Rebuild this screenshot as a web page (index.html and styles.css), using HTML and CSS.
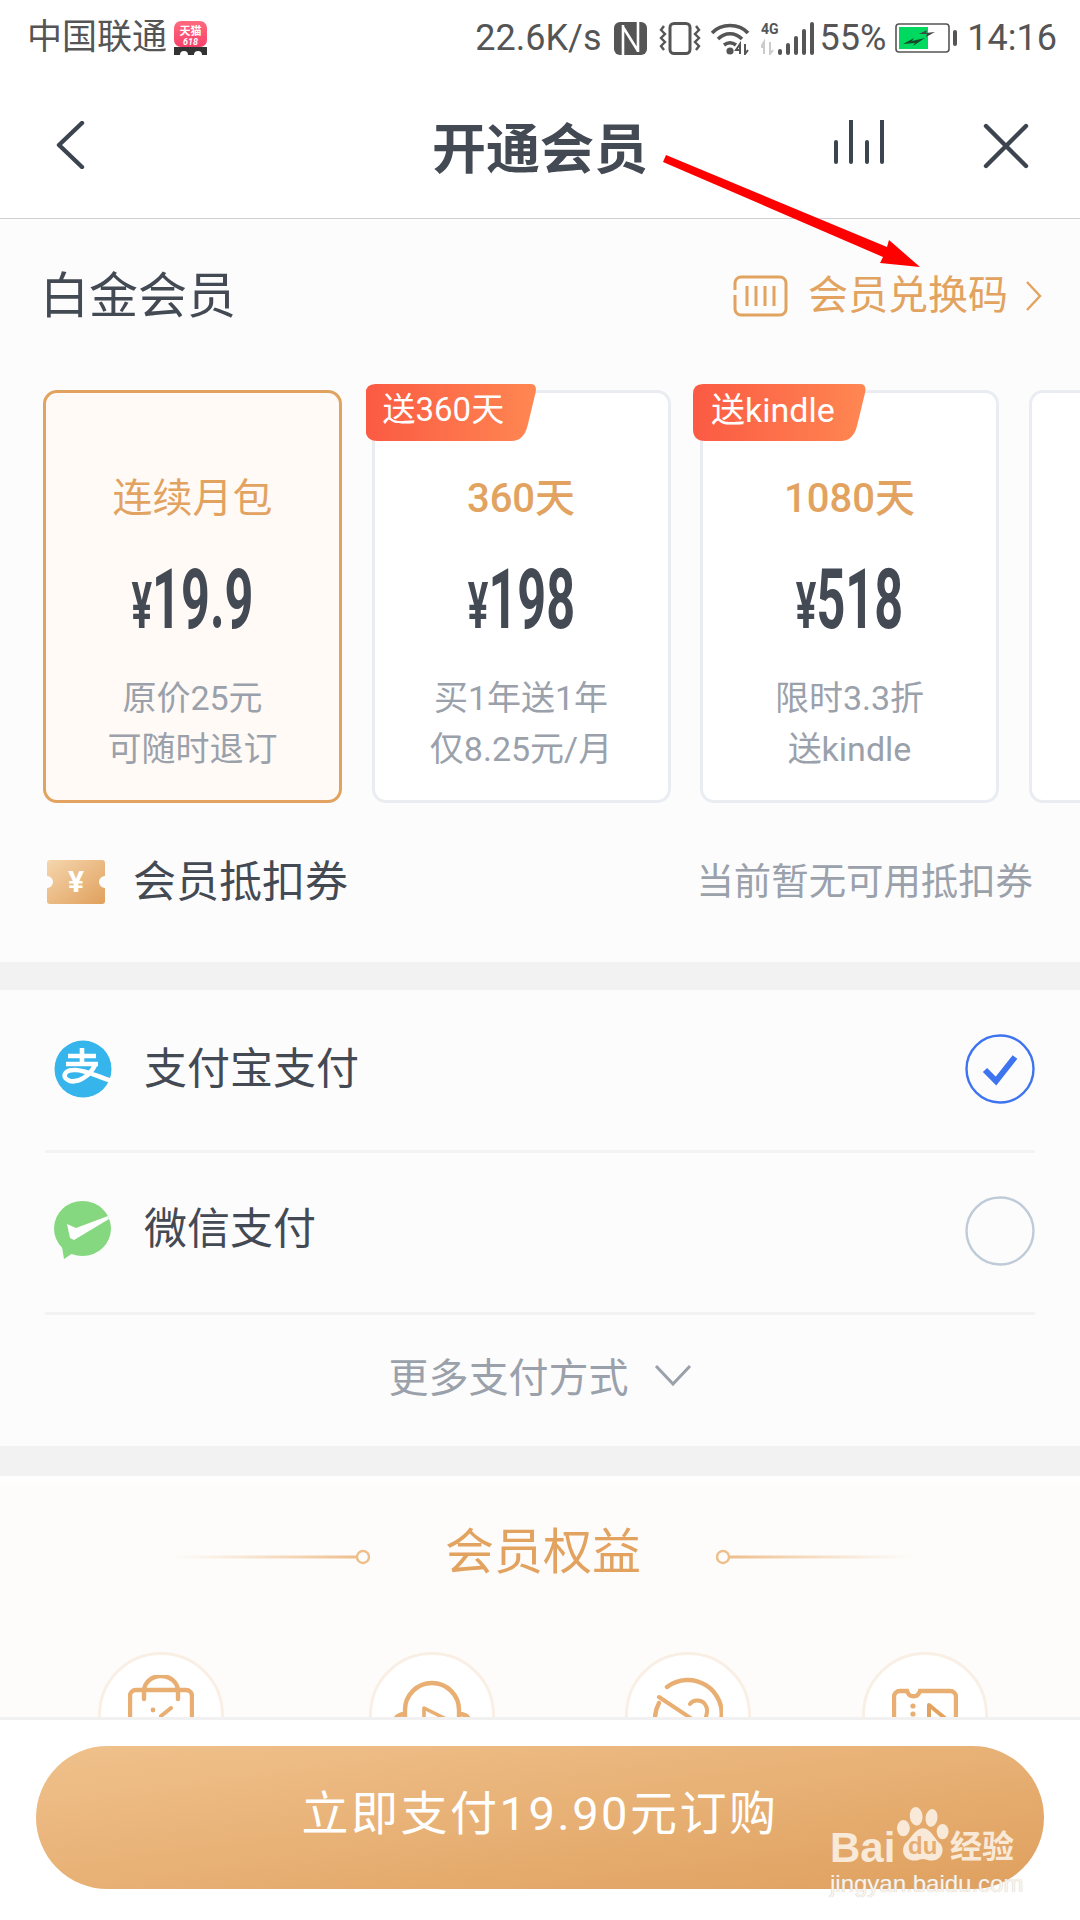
FILE: index.html
```html
<!DOCTYPE html>
<html lang="zh-CN">
<head>
<meta charset="utf-8">
<title>开通会员</title>
<link rel="stylesheet" href="styles.css">
</head>
<body>
<div class="page">
  <div class="statusbar">
    <div class="sb-left">
      <span class="carrier">中国联通</span>
      <svg class="tmall" width="34" height="34" viewBox="0 0 34 34">
        <defs><linearGradient id="tm" x1="0" y1="0" x2="0" y2="1"><stop offset="0" stop-color="#ff6b7d"/><stop offset="1" stop-color="#f9406c"/></linearGradient></defs>
        <rect x="0" y="0" width="33" height="26" rx="7" fill="url(#tm)"/>
        <text x="16.5" y="14" class="tm-a" text-anchor="middle">天猫</text>
        <text x="16.5" y="24" class="tm-b" text-anchor="middle">618</text>
        <path d="M0 26h33v8H28a4 4 0 0 0-8 0h-6a4 4 0 0 0-8 0H0z" fill="#333"/>
      </svg>
    </div>
    <div class="sb-right">
      <span class="speed">22.6K/s</span>
      <svg class="s-nfc" width="33" height="33" viewBox="0 0 33 33"><rect width="33" height="33" rx="6" fill="#555"/><path d="M9 33V3M24 0v30M9 5l15 24" fill="none" stroke="#fff" stroke-width="2.6"/></svg>
      <svg class="s-vib" width="42" height="33" viewBox="0 0 42 33"><rect x="11" y="1.5" width="20" height="30" rx="4" fill="none" stroke="#555" stroke-width="3"/><path d="M5 4 2 8l4 4-4 4 4 4-4 4 3 4M37 4l3 4-4 4 4 4-4 4 4 4-3 4" fill="none" stroke="#555" stroke-width="2.4"/></svg>
      <svg class="s-wifi" width="40" height="33" viewBox="0 0 40 33"><path d="M1 11C10 1 28 1 37 11M7 17c7-7 17-7 24 0M13 23c4-3 8-3 12 0" fill="none" stroke="#555" stroke-width="3.6"/><circle cx="19" cy="29" r="3.6" fill="#555"/><path d="M29 32V22l-4 6h4M34 22v10l3-4" fill="none" stroke="#555" stroke-width="2"/></svg>
      <svg class="s-sig" width="53" height="33" viewBox="0 0 53 33"><text x="0" y="12" class="s-4g">4G</text><path d="M3 32V20l-3 5h3M9 20v12l3-4" fill="none" stroke="#ccc" stroke-width="2"/><rect x="17" y="27" width="4" height="6" rx="2" fill="#555"/><rect x="25" y="21" width="4" height="12" rx="2" fill="#555"/><rect x="33" y="14" width="4" height="19" rx="2" fill="#555"/><rect x="41" y="7" width="4" height="26" rx="2" fill="#555"/><rect x="49" y="0" width="4" height="33" rx="2" fill="#555"/></svg>
      <span class="pct">55%</span>
      <svg class="s-bat" width="62" height="30" viewBox="0 0 62 30"><rect x="1" y="1" width="53" height="28" rx="3" fill="#fff" stroke="#555" stroke-width="1.6"/><rect x="4" y="4" width="29" height="22" fill="#00d95f"/><path d="M8 21 19 15 17 18 30 15 18 23 20 20z" fill="#14492b"/><path d="M24 11 32 7 31 10 40 9 31 14 32 11z" fill="#444"/><rect x="58" y="7" width="4" height="16" rx="2" fill="#555"/></svg>
      <span class="clock">14:16</span>
    </div>
  </div>

  <header class="topbar">
    <svg class="ic-back" width="30" height="48" viewBox="0 0 30 48"><path d="M27 2 4 24l23 22" fill="none" stroke="#3c4450" stroke-width="4.4" stroke-linecap="round" stroke-linejoin="round"/></svg>
    <h1 class="title">开通会员</h1>
    <svg class="ic-bars" width="50" height="44" viewBox="0 0 50 44"><path d="M2 22v20M17 0v42M33 22v20M48 0v42" stroke="#3c4450" stroke-width="4" stroke-linecap="round"/></svg>
    <svg class="ic-close" width="46" height="46" viewBox="0 0 46 46"><path d="M3 3l40 40M43 3 3 43" stroke="#3c4450" stroke-width="4.4" stroke-linecap="round"/></svg>
  </header>

  <section class="plans">
    <div class="plans-head">
      <h2 class="plans-title">白金会员</h2>
      <div class="redeem">
        <svg width="55" height="42" viewBox="0 0 55 42"><path d="M2 15V8a6 6 0 0 1 6-6h39a6 6 0 0 1 6 6v26a6 6 0 0 1-6 6H8a6 6 0 0 1-6-6V20" fill="none" stroke="#e2a361" stroke-width="3"/><path d="M14 11v20M23 11v20M32 11v20M41 11v20" stroke="#e2a361" stroke-width="3"/></svg>
        <span class="redeem-text">会员兑换码</span>
        <svg class="redeem-chev" width="17" height="32" viewBox="0 0 17 32"><path d="M2 2l13 14L2 30" fill="none" stroke="#e2a361" stroke-width="2.4"/></svg>
      </div>
    </div>

    <div class="cards">
      <div class="card card-on">
        <div class="card-name">连续月包</div>
        <div class="price"><span class="yen">¥</span>19.9</div>
        <div class="card-note">原价25元<br>可随时退订</div>
      </div>
      <div class="card">
        <div class="tag tag-a">送360天</div>
        <div class="card-name">360天</div>
        <div class="price"><span class="yen">¥</span>198</div>
        <div class="card-note">买1年送1年<br>仅8.25元/月</div>
      </div>
      <div class="card">
        <div class="tag tag-b">送kindle</div>
        <div class="card-name">1080天</div>
        <div class="price"><span class="yen">¥</span>518</div>
        <div class="card-note">限时3.3折<br>送kindle</div>
      </div>
      <div class="card"></div>
    </div>

    <div class="voucher">
      <svg width="58" height="44" viewBox="0 0 58 44">
        <defs><linearGradient id="vc" x1="0" y1="0" x2="1" y2="1"><stop offset="0" stop-color="#f5d6ae"/><stop offset="1" stop-color="#e0a05c"/></linearGradient></defs>
        <path d="M3 0h52a3 3 0 0 1 3 3v13a6 6 0 0 0 0 12v13a3 3 0 0 1-3 3H3a3 3 0 0 1-3-3V28a6 6 0 0 0 0-12V3a3 3 0 0 1 3-3z" fill="url(#vc)"/>
        <text x="29" y="32" class="vc-yen" text-anchor="middle">¥</text>
      </svg>
      <span class="voucher-name">会员抵扣券</span>
      <span class="voucher-note">当前暂无可用抵扣券</span>
    </div>
  </section>

  <section class="pay">
    <div class="pay-row">
      <svg class="pay-ic" width="58" height="58" viewBox="0 0 58 58"><circle cx="29" cy="29" r="28.5" fill="#36b5ec"/><path d="M14 16H42M28 8V24M12 24H44M41 25C36 36 24 43 16 41C7 38 10 30 20 30C30 29 44 37 58 41" fill="none" stroke="#fff" stroke-width="4.6"/></svg>
      <span class="pay-name">支付宝支付</span>
      <svg class="radio" width="70" height="70" viewBox="0 0 70 70"><circle cx="35" cy="35" r="33.5" fill="none" stroke="#3f74f0" stroke-width="2.4"/><path d="M20 36l11 11 19-24" fill="none" stroke="#3f74f0" stroke-width="6"/></svg>
    </div>
    <div class="pay-row">
      <svg class="pay-ic" width="58" height="60" viewBox="0 0 58 60"><ellipse cx="28.5" cy="27.5" rx="28.5" ry="27.5" fill="#85d87f"/><path d="M8 46 10 58 19 52z" fill="#85d87f"/><path d="M13 23 22 27 54 15 55 18 20 39 16 37z" fill="#fff"/></svg>
      <span class="pay-name">微信支付</span>
      <svg class="radio" width="70" height="70" viewBox="0 0 70 70"><circle cx="35" cy="35" r="33.5" fill="none" stroke="#bfcbd8" stroke-width="2.4"/></svg>
    </div>
    <div class="pay-more">
      <span>更多支付方式</span>
      <svg width="38" height="22" viewBox="0 0 38 22"><path d="M2 2l17 18L36 2" fill="none" stroke="#9aa1ab" stroke-width="3"/></svg>
    </div>
  </section>

  <section class="benefits">
    <div class="benefits-head">
      <svg width="196" height="16" viewBox="0 0 196 16"><defs><linearGradient id="ll" x1="0" x2="1"><stop offset="0" stop-color="#f0c9a0" stop-opacity="0"/><stop offset="1" stop-color="#eebd8a"/></linearGradient></defs><rect y="6.5" width="184" height="3" fill="url(#ll)"/><circle cx="189" cy="8" r="6" fill="#fdfcfa" stroke="#eebd8a" stroke-width="2.4"/></svg>
      <h2 class="benefits-title">会员权益</h2>
      <svg width="196" height="16" viewBox="0 0 196 16"><defs><linearGradient id="lr" x1="1" x2="0"><stop offset="0" stop-color="#f0c9a0" stop-opacity="0"/><stop offset="1" stop-color="#eebd8a"/></linearGradient></defs><rect x="12" y="6.5" width="184" height="3" fill="url(#lr)"/><circle cx="7" cy="8" r="6" fill="#fdfcfa" stroke="#eebd8a" stroke-width="2.4"/></svg>
    </div>
    <div class="perks">
      <div class="perk"><svg width="66" height="44" viewBox="0 0 66 44"><path d="M16 24v-8a17 15 0 0 1 34 0v8M2 46V21a6 6 0 0 1 6-6h50a6 6 0 0 1 6 6v25" fill="none" stroke="#e8ae72" stroke-width="4.4" stroke-linecap="round"/><circle cx="25" cy="35" r="2.4" fill="#e8ae72"/><path d="M33 41l10-8" stroke="#e8ae72" stroke-width="4" stroke-linecap="round"/></svg></div>
      <div class="perk"><svg width="76" height="44" viewBox="0 0 76 44"><path d="M11 46V35a27 27 0 0 1 54 0v11M1 44c3-4 7-5 10-5M65 39c3 0 8 1 10 5" fill="none" stroke="#e8ae72" stroke-width="4.4"/><path d="M30 46V33l22 11" fill="none" stroke="#e8ae72" stroke-width="3.6" stroke-linejoin="round"/></svg></div>
      <div class="perk"><svg width="70" height="44" viewBox="0 0 70 44"><path d="M6 28A34 34 0 0 0 2 46M14 12A34 34 0 0 1 68 46" fill="none" stroke="#e8ae72" stroke-width="4.4" stroke-linecap="round"/><path d="M6 22 42 46M37 29C40 24 50 24 53 31C55 35 54 38 52 46" fill="none" stroke="#e8ae72" stroke-width="4" stroke-linecap="round"/></svg></div>
      <div class="perk"><svg width="66" height="44" viewBox="0 0 66 44"><path d="M2 46V22a6 6 0 0 1 6-6h7c2 7 11 7 13 0h30a6 6 0 0 1 6 6v24" fill="none" stroke="#e8ae72" stroke-width="4.4"/><circle cx="21" cy="31" r="2.6" fill="#e8ae72"/><circle cx="21" cy="39" r="2.6" fill="#e8ae72"/><path d="M37 46V30l17 14" fill="none" stroke="#e2a361" stroke-width="4" stroke-linejoin="round"/></svg></div>
    </div>
  </section>

  <footer class="paybar">
    <button class="paybtn">立即支付19.90元订购</button>
  </footer>

  <svg class="arrow" width="270" height="125" viewBox="0 0 270 125"><path d="M3 0 224 92 226 85 257 112 217 108 220 102 0 7z" fill="#fe0000"/></svg>

  <div class="watermark">
    <div class="wm-logo">
      <span class="wm-bai">Bai</span>
      <span class="wm-paw">
        <svg width="56" height="58" viewBox="0 0 64 68"><ellipse cx="24" cy="12" rx="7.5" ry="11" fill="#f9e9d8" transform="rotate(-6 24 12)"/><ellipse cx="42" cy="14" rx="7" ry="10.5" fill="#f9e9d8" transform="rotate(8 42 14)"/><ellipse cx="9" cy="26" rx="7.5" ry="9.5" fill="#f9e9d8"/><ellipse cx="55" cy="30" rx="7" ry="9" fill="#f9e9d8"/><path d="M32 26c9 0 13 12 20 18 6 6 3 20-10 20-4 0-7-2-10-2s-6 2-10 2C9 64 6 52 11 44c7-6 12-18 21-18z" fill="#f9e9d8"/></svg>
        <span class="wm-du">du</span>
      </span>
      <span class="wm-jy">经验</span>
    </div>
    <div class="wm-url">jingyan.baidu.com</div>
  </div>
</div>
</body>
</html>
```

FILE: styles.css
```css
* { box-sizing: border-box; }
html, body { margin: 0; padding: 0; }
body { background: #fff; font-family: Roboto, "Noto Sans CJK SC", sans-serif; }
h1, h2 { margin: 0; font-weight: 400; }
.page { position: relative; width: 1080px; height: 1920px; overflow: hidden; background: #f2f2f2; display: flex; flex-direction: column; }

/* status bar */
.statusbar { height: 70px; flex: none; display: flex; justify-content: space-between; align-items: center; padding: 6px 23px 0 27px; color: #555; background: #fff; }
.sb-left, .sb-right { display: flex; align-items: center; }
.carrier { font-size: 35px; line-height: 40px; }
.tmall { margin-left: 7px; }
.tm-a { font: 700 11px "Noto Sans CJK SC", sans-serif; fill: #fff; }
.tm-b { font: italic 700 9px Roboto, sans-serif; fill: #fff; }
.speed, .pct, .clock { font-size: 36px; line-height: 40px; }
.s-nfc { margin-left: 12px; }
.s-vib { margin-left: 12px; }
.s-wifi { margin-left: 10px; }
.s-sig { margin-left: 10px; }
.s-4g { font: 700 14px Roboto, sans-serif; fill: #555; }
.pct { margin-left: 6px; }
.s-bat { margin-left: 9px; }
.clock { margin-left: 10px; }

/* top bar */
.topbar { height: 149px; flex: none; display: flex; align-items: center; position: relative; padding: 0 0 0 55px; border-bottom: 1px solid #cfcfcf; background: #fff; }
.ic-back { flex: none; margin-top: 2px; }
.title { position: absolute; left: 0; right: 0; text-align: center; font-size: 54px; font-weight: 700; color: #444a54; line-height: 70px; top: 41px; font-family: "Noto Sans CJK SC", sans-serif; }
.ic-bars { flex: none; margin-left: 749px; margin-top: -4px; }
.ic-close { flex: none; margin-left: 99px; margin-top: 4px; }

/* plans */
.plans { flex: none; background: #fcfcfc; height: 743px; }
.plans-head { height: 171px; display: flex; justify-content: space-between; align-items: flex-start; padding: 0 38px 0 40px; }
.plans-title { font-size: 49px; line-height: 60px; color: #444a54; margin-top: 48px; }
.redeem { display: flex; align-items: center; margin-top: 55px; }
.redeem-text { font-size: 40px; line-height: 44px; color: #e2a361; margin-left: 20px; }
.redeem-chev { margin-left: 17px; }

.cards { display: flex; gap: 29.5px; padding-left: 43px; height: 413px; }
.card { position: relative; flex: none; width: 299px; height: 413px; border: 3px solid #e9edf2; border-radius: 14px; background: #fff; text-align: center; }
.card-on { border-color: #e2a361; background: #fffaf6; }
.card-name { font-size: 40px; line-height: 50px; color: #e2a361; margin-top: 81px; }
.card:not(.card-on) .card-name { font-weight: 500; }
.price { font-size: 84px; font-weight: 700; line-height: 90px; color: #444a54; margin-top: 31px; transform: scaleX(.6); white-space: nowrap; }
.yen { font-size: 64px; }
.card-note { font-size: 34px; line-height: 51px; color: #9aa1ab; margin-top: 21px; }
.tag { position: absolute; left: -9px; top: -9px; height: 57px; color: #fff; font-size: 33px; line-height: 52px; text-align: left; padding-left: 17px; background: linear-gradient(90deg, #fb5a43, #ff8752); }
.tag-a { width: 171px; clip-path: path('M10 0H165Q172 0 170 9L162 42Q158 57 146 57H12Q0 57 0 45V10Q0 0 10 0Z'); }
.tag-b { left: -10px; width: 173px; clip-path: path('M10 0H167Q174 0 172 9L164 42Q160 57 148 57H12Q0 57 0 45V10Q0 0 10 0Z'); padding-left: 18px; font-size: 34px; }

.voucher { display: flex; align-items: center; height: 159px; padding: 0 47px 2px; }
.voucher-name { font-size: 43px; line-height: 50px; color: #444a54; margin-left: 28px; }
.voucher-note { font-size: 37.4px; line-height: 50px; color: #9aa1ab; margin-left: auto; }
.vc-yen { font: 700 30px Roboto, sans-serif; fill: #fff; }

/* payment */
.pay { flex: none; margin-top: 28px; background: #fcfcfc; height: 456px; padding: 0 45px; }
.pay-row { display: flex; align-items: center; height: 163px; padding: 0 0 3px 9px; border-bottom: 3px solid #f3f3f3; }
.pay-row:nth-child(2) { height: 162px; }
.pay-ic { flex: none; }
.pay-name { font-size: 43px; line-height: 50px; color: #444a54; margin-left: 32px; }
.pay-row:nth-child(2) .pay-name { margin-top: -4px; }
.radio { flex: none; margin-left: auto; }
.pay-more { display: flex; align-items: center; justify-content: center; height: 120px; gap: 25px; font-size: 40px; color: #9aa1ab; }

/* benefits */
.benefits { flex: none; margin-top: 30px; background: linear-gradient(#fff, #fdfcfa 14px); height: 241px; overflow: hidden; }
.benefits-head { display: flex; justify-content: center; align-items: center; height: 64px; margin-top: 45px; padding-top: 8px; gap: 75px; padding-left: 6px; }
.benefits-head svg { flex: none; }
.benefits-title { font-size: 49px; line-height: 60px; color: #e2a361; margin: -8px 0 0; }
.perks { display: grid; grid-template-columns: 271px 256px 237px 125px; padding-left: 98px; margin-top: 67px; }
.perk { width: 126px; height: 126px; border-radius: 50%; border: 3px solid #f9efe5; background: #fff; display: flex; justify-content: center; align-items: flex-start; padding-top: 20px; }
.perk svg { flex: none; overflow: hidden; }

/* footer */
.paybar { flex: none; height: 203px; background: #fff; border-top: 3px solid #f1f1f1; padding: 26px 36px 0; }
.paybtn { display: block; width: 1008px; height: 143px; border: 0; border-radius: 72px; background: linear-gradient(172deg, #f0c18c, #dfa05e); color: #fff; font: 400 47px Roboto, "Noto Sans CJK SC", sans-serif; letter-spacing: 2.5px; padding: 0 0 16px; }

/* overlays */
.arrow { position: absolute; left: 663px; top: 155px; }
.watermark { position: absolute; left: 830px; top: 1806px; width: 200px; color: #f9e9d8; }
.wm-logo { display: flex; align-items: flex-end; height: 58px; }
.wm-bai { font: 700 42px/44px "Liberation Sans", sans-serif; width: 65px; flex: none; margin-bottom: -6px; }
.wm-paw { position: relative; flex: none; width: 56px; height: 58px; }
.wm-paw svg { display: block; }
.wm-du { position: absolute; left: 13px; top: 26px; font: 700 24px/28px "Liberation Sans", sans-serif; color: #e6ac72; }
.wm-jy { font: 700 32px/40px "Noto Sans CJK SC", sans-serif; margin-left: -1px; white-space: nowrap; }
.wm-url { font: 400 24px/30px "Liberation Sans", sans-serif; color: #fbf3ea; margin-top: 5px; white-space: nowrap; text-shadow: 0 0 1px #bbb; }
```
